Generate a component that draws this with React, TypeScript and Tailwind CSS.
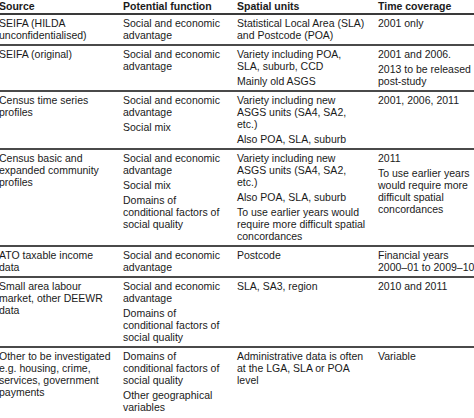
type Cell = string[];
type Row = [Cell, Cell, Cell, Cell];

const rows: Row[] = [
  [
    ['SEIFA (HILDA unconfidentialised)'],
    ['Social and economic advantage'],
    ['Statistical Local Area (SLA) and Postcode (POA)'],
    ['2001 only'],
  ],
  [
    ['SEIFA (original)'],
    ['Social and economic advantage'],
    ['Variety including POA, SLA, suburb, CCD', 'Mainly old ASGS'],
    ['2001 and 2006.', '2013 to be released post-study'],
  ],
  [
    ['Census time series profiles'],
    ['Social and economic advantage', 'Social mix'],
    ['Variety including new ASGS units (SA4, SA2, etc.)', 'Also POA, SLA, suburb'],
    ['2001, 2006, 2011'],
  ],
  [
    ['Census basic and expanded community profiles'],
    ['Social and economic advantage', 'Social mix', 'Domains of conditional factors of social quality'],
    [
      'Variety including new ASGS units (SA4, SA2, etc.)',
      'Also POA, SLA, suburb',
      'To use earlier years would require more difficult spatial concordances',
    ],
    ['2011', 'To use earlier years would require more difficult spatial concordances'],
  ],
  [
    ['ATO taxable income data'],
    ['Social and economic advantage'],
    ['Postcode'],
    ['Financial years\n2000–01 to 2009–10'],
  ],
  [
    ['Small area labour market, other DEEWR data'],
    ['Social and economic advantage', 'Domains of conditional factors of social quality'],
    ['SLA, SA3, region'],
    ['2010 and 2011'],
  ],
  [
    ['Other to be investigated e.g. housing, crime, services, government payments'],
    ['Domains of conditional factors of social quality', 'Other geographical variables'],
    ['Administrative data is often at the LGA, SLA or POA level'],
    ['Variable'],
  ],
];

const cols = ['w-[124px] pr-[8px]', 'w-[114px] pr-[12px]', 'w-[141px] pr-[11.5px]', 'w-[110px] pr-[5px]'];
const headers = ['Source', 'Potential function', 'Spatial units', 'Time coverage'];

export default function App() {
  return (
    <div
      className="h-[418px] w-[474px] overflow-hidden bg-white text-[10.5px] leading-[12px] text-[#1a1a1a]"
      style={{ fontFamily: '"Liberation Sans", Arial, sans-serif' }}
    >
      <div className="-ml-px w-[489px]">
        <div className="flex border-b-2 border-[#3a3a3a] pb-[1px] font-bold">
          {headers.map((h, i) => (
            <div key={h} className={`${cols[i]} shrink-0`}>
              {h}
            </div>
          ))}
        </div>
        {rows.map((row, r) => (
          <div key={r} className="flex border-b-2 border-[#4a4a4a] pt-[2px] pb-[3px] last:border-b-0">
            {row.map((cell, c) => (
              <div key={c} className={`${cols[c]} shrink-0 flex flex-col gap-[3px]`}>
                {cell.map(p =>
                  p.includes('\n') ? (
                    <p key={p} className="whitespace-pre">
                      {p}
                    </p>
                  ) : (
                    <p key={p}>{p}</p>
                  ),
                )}
              </div>
            ))}
          </div>
        ))}
      </div>
    </div>
  );
}
